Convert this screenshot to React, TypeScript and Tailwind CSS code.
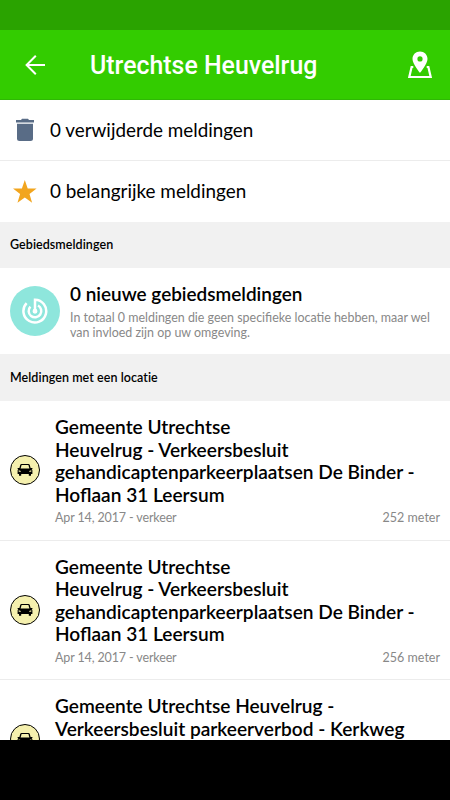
type Report = {
  lines: string[];
  date: string;
  kind: string;
  distance: string;
};

const reports: Report[] = [
  {
    lines: ["Gemeente Utrechtse", "Heuvelrug - Verkeersbesluit", "gehandicaptenparkeerplaatsen De Binder -", "Hoflaan 31 Leersum"],
    date: "Apr 14, 2017",
    kind: "verkeer",
    distance: "252 meter"
  },
  {
    lines: ["Gemeente Utrechtse", "Heuvelrug - Verkeersbesluit", "gehandicaptenparkeerplaatsen De Binder -", "Hoflaan 31 Leersum"],
    date: "Apr 14, 2017",
    kind: "verkeer",
    distance: "256 meter"
  }
];

function ArrowBackIcon() {
  return (
    <svg viewBox="0 0 26 26" className="h-[26px] w-[26px]" fill="none" stroke="#fff" strokeWidth="2">
      <path d="M23 13H4.5M13.8 3.8L4.6 13L13.8 22.2" />
    </svg>
  );
}

function MapPinIcon() {
  return (
    <svg viewBox="0 0 26 28" className="h-7 w-[26px]" fill="none">
      <path
        fill="#fff"
        fillRule="evenodd"
        d="M13 .5C8.8 .5 5.5 3.7 5.5 7.9C5.5 12.8 13 21.8 13 21.8S20.5 12.8 20.5 7.9C20.5 3.7 17.2 .5 13 .5ZM13 5.3a2.6 2.6 0 1 1 0 5.2a2.6 2.6 0 0 1 0-5.2Z"
      />
      <path stroke="#fff" strokeWidth="2.2" d="M6.3 16H4.6L2.3 26H23.7L21.4 16H19.7" />
    </svg>
  );
}

function TrashIcon() {
  return (
    <svg viewBox="0 0 28 28" className="h-7 w-7" fill="#596c86">
      <path d="M5 4H10L11 2.8H17L18 4H23V6.4H5Z" />
      <path d="M6 7.8H22V22.5Q22 25 19.5 25H8.5Q6 25 6 22.5Z" />
    </svg>
  );
}

function StarIcon() {
  return (
    <svg viewBox="0 0 28 28" className="h-7 w-7" fill="#f2a51e">
      <path d="M13.8 3L16.7 11.4L25.6 11.6L18.5 16.9L21.1 25.8L13.8 20.6L6.5 25.8L9.1 16.9L2 11.6L10.9 11.4Z" />
    </svg>
  );
}

function RadarIcon() {
  return (
    <svg viewBox="0 0 26 26" className="h-[26px] w-[26px]" fill="none" stroke="#fff" strokeWidth="2.5">
      <path d="M4.6 5.2A11.4 11.4 0 1 0 13 1.7V13" />
      <path d="M8.4 8.7A6.3 6.3 0 1 0 16 7.5" />
      <circle cx="13" cy="13.2" r="1.2" fill="#fff" />
    </svg>
  );
}

function CarIcon() {
  return (
    <svg viewBox="0 0 16 14" className="h-3.5 w-4">
      <path
        fill="#000"
        fillRule="evenodd"
        d="M4.5 1H11.5Q12.5 1 12.8 2L13.6 5H15.4V6H14.6Q15.4 6.6 15.4 7.6V11H14V12.8H11.8V11H4.2V12.8H2V11H.6V7.6Q.6 6.6 1.4 6H.6V5H2.4L3.2 2Q3.5 1 4.5 1ZM4.6 2L3.6 5.5H12.4L11.4 2ZM1.7 7.3V8.7H3.8V8.1ZM14.3 7.3V8.7H12.2V8.1Z"
      />
    </svg>
  );
}

function SectionHeader({ label, className }: { label: string; className: string }) {
  return <div className={`flex shrink-0 items-center bg-[#f1f1f1] px-2.5 pt-0.5 text-[12.5px] font-semibold tracking-[0.06px] ${className}`}>{label}</div>;
}

function CarBadge() {
  return (
    <div className="flex h-[30px] w-[30px] shrink-0 items-center justify-center rounded-full border border-black bg-[#f5f0ae]">
      <CarIcon />
    </div>
  );
}

function ReportTitle({ lines }: { lines: string[] }) {
  return (
    <div className="text-[19.1px] leading-[22.5px] font-semibold whitespace-nowrap">
      {lines.map((line) => (
        <div key={line}>{line}</div>
      ))}
    </div>
  );
}

export default function App() {
  return (
    <div className="flex h-[800px] w-[450px] flex-col overflow-hidden bg-white font-['Lato',sans-serif] text-black">
      <div className="h-[30px] shrink-0 bg-[#2aa300]" />
      <header className="flex h-[70px] shrink-0 items-center border-b border-[#2fb805] bg-[#33cc00] pr-[17px] pl-[22px] text-white">
        <ArrowBackIcon />
        <h1 className="ml-[42px] pt-[3px] font-['Roboto',sans-serif] text-[24.9px] font-medium">Utrechtse Heuvelrug</h1>
        <div className="ml-auto">
          <MapPinIcon />
        </div>
      </header>

      <main className="flex min-h-0 flex-1 flex-col overflow-hidden">
        <div className="flex h-[61px] shrink-0 items-center border-b border-[#ececec] pl-[11px] text-[18.85px]">
          <TrashIcon />
          <span className="ml-[11px]">0 verwijderde meldingen</span>
        </div>
        <div className="flex h-[60.5px] shrink-0 items-center pl-[11px] text-[18.9px]">
          <StarIcon />
          <span className="ml-[11px]">0 belangrijke meldingen</span>
        </div>

        <SectionHeader label="Gebiedsmeldingen" className="h-[46.5px]" />
        <div className="flex h-[86px] shrink-0 items-center pl-2.5">
          <div className="flex h-[50px] w-[50px] shrink-0 items-center justify-center rounded-full bg-[#8ee6dc]">
            <RadarIcon />
          </div>
          <div className="ml-2.5">
            <div className="text-[18.95px] leading-[22px] font-semibold">0 nieuwe gebiedsmeldingen</div>
            <div className="mt-[5px] text-[12.45px] leading-[15px] whitespace-nowrap text-[#888]">
              In totaal 0 meldingen die geen specifieke locatie hebben, maar wel
              <br />
              van invloed zijn op uw omgeving.
            </div>
          </div>
        </div>

        <SectionHeader label="Meldingen met een locatie" className="h-[47px]" />
        {reports.map((report) => (
          <div key={report.distance} className="flex h-[139.5px] shrink-0 items-center border-b border-[#ececec] px-2.5">
            <CarBadge />
            <div className="ml-[15px] flex-1 pt-[0.7px]">
              <ReportTitle lines={report.lines} />
              <div className="mt-1 flex justify-between text-[12.5px] leading-[15px] text-[#888]">
                <span className="tracking-[-0.13px]">
                  {report.date} - {report.kind}
                </span>
                <span>{report.distance}</span>
              </div>
            </div>
          </div>
        ))}
        <div className="flex h-[117px] shrink-0 items-center px-2.5">
          <CarBadge />
          <div className="ml-[15px] h-[87px]">
            <ReportTitle lines={["Gemeente Utrechtse Heuvelrug -", "Verkeersbesluit parkeerverbod - Kerkweg"]} />
          </div>
        </div>
      </main>
      <div className="h-[60px] shrink-0 bg-black" />
    </div>
  );
}
